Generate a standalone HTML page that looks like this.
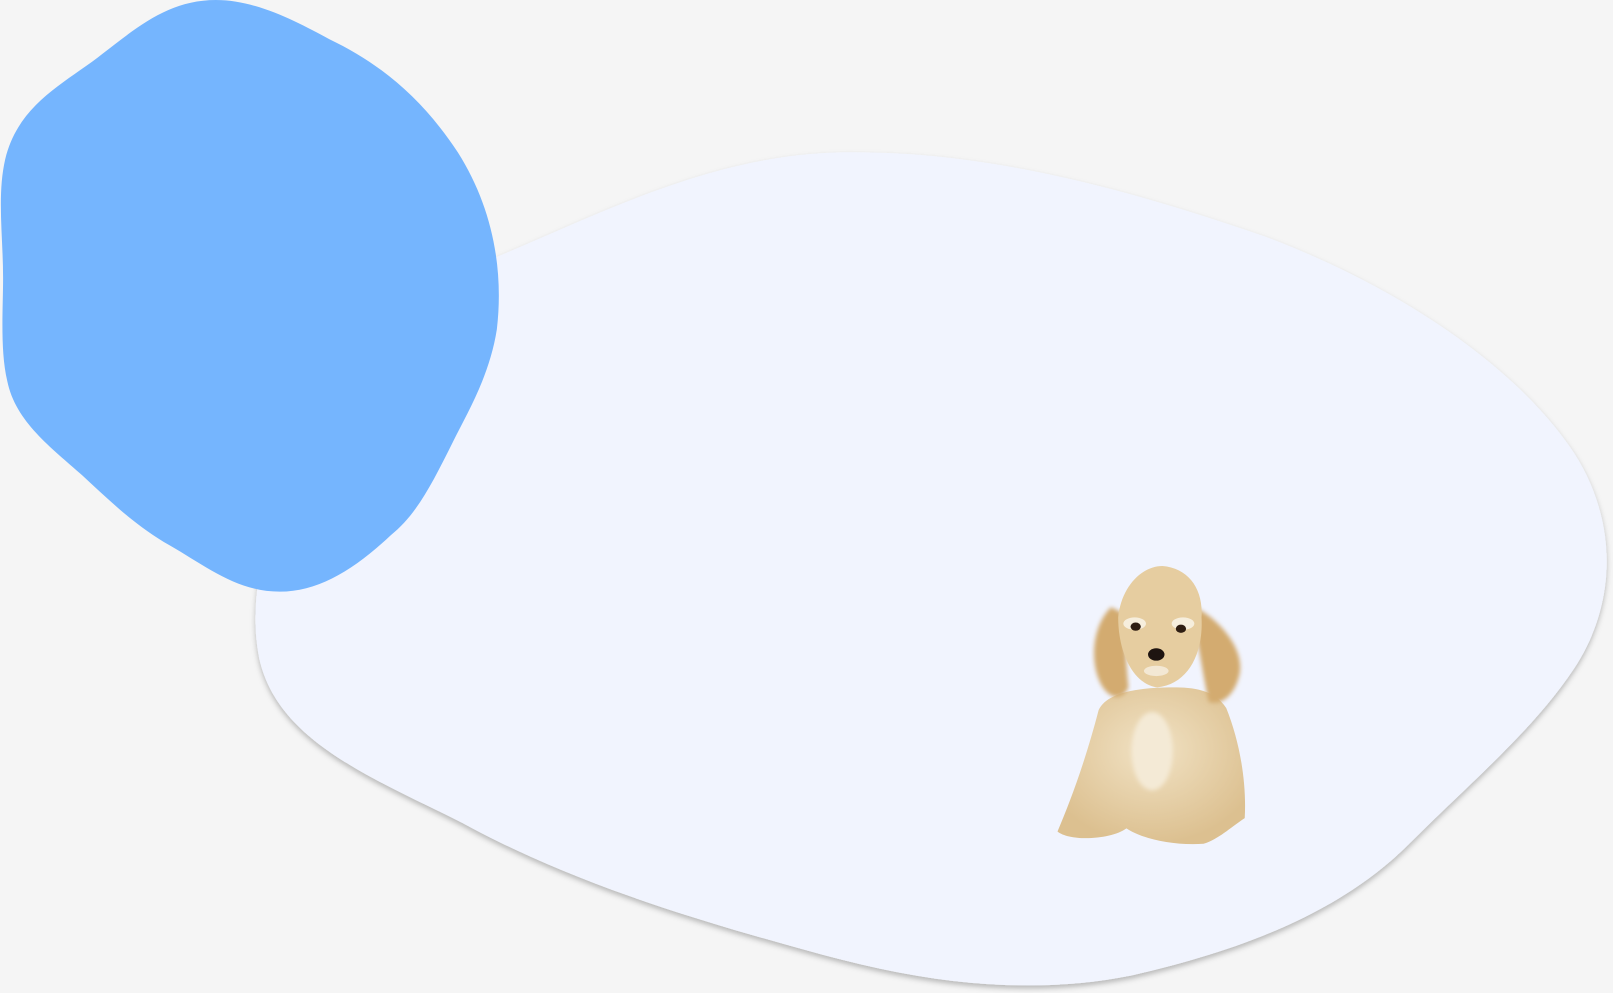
<!DOCTYPE html>
<html><head><style>
html,body{margin:0;padding:0;background:#f5f5f5;width:1613px;height:993px;overflow:hidden}
svg{display:block}
</style></head><body>
<svg width="1613" height="993" viewBox="0 0 1568 965" preserveAspectRatio="none">
<defs>
<filter id="sh" x="-10%" y="-10%" width="120%" height="130%">
<feDropShadow dx="0" dy="3" stdDeviation="2.5" flood-color="#000" flood-opacity="0.25"/>
</filter>
<filter id="blur"><feGaussianBlur stdDeviation="2"/></filter>
<radialGradient id="fur" cx="50%" cy="40%" r="60%">
<stop offset="0" stop-color="#f1e2c4"/><stop offset="1" stop-color="#dcc090"/>
</radialGradient>
</defs>
<path filter="url(#sh)" fill="#f1f4fe" d="M470,255 C580,210 690,150 820,148 C960,146 1100,185 1230,230 C1350,275 1470,350 1530,440 C1575,510 1570,590 1530,650 C1490,710 1430,760 1370,820 C1300,890 1200,925 1100,948 C1000,968 900,955 800,928 C680,895 560,860 450,800 C360,755 270,720 252,640 C244,600 250,560 260,520 Z"/>
<path fill="#75b5fe" d="M210,0 C250,0 290,22 320,38 C370,62 410,95 445,148 C478,200 490,260 483,320 C476,365 455,400 440,430 C420,470 405,500 380,520 C345,553 310,575 272,575 C230,575 200,550 165,530 C130,510 105,485 80,462 C50,435 15,410 7,370 C0,340 3,300 3,270 C3,230 -3,190 5,155 C18,100 65,80 100,52 C135,25 165,0 210,0 Z"/>
<g>
<path fill="url(#fur)" d="M1068,690 C1055,740 1040,780 1028,808 C1040,818 1080,816 1095,805 C1110,815 1140,822 1170,820 C1185,815 1195,805 1210,795 C1212,760 1205,720 1192,688 C1180,670 1160,668 1140,668 C1100,668 1075,675 1068,690 Z"/>
<ellipse cx="1120" cy="730" rx="20" ry="38" fill="#f4ead6" filter="url(#blur)"/>
<path fill="#d3ab70" filter="url(#blur)" d="M1080,590 C1062,608 1060,640 1068,660 C1075,678 1090,684 1097,668 C1094,640 1094,612 1090,595 Z"/>
<path fill="#d3ab70" filter="url(#blur)" d="M1162,590 C1185,602 1210,630 1205,655 C1200,678 1185,686 1175,682 C1168,650 1165,620 1158,600 Z"/>
<path fill="#e6cda0" d="M1087,600 C1090,570 1110,550 1130,550 C1155,552 1170,572 1168,600 C1170,635 1155,665 1125,668 C1102,665 1087,635 1087,600 Z"/>
<ellipse cx="1103" cy="606" rx="11" ry="6" fill="#f6eedd"/>
<ellipse cx="1150" cy="606" rx="11" ry="6" fill="#f6eedd"/>
<ellipse cx="1104" cy="609" rx="5" ry="4" fill="#2e1d12"/>
<ellipse cx="1148" cy="611" rx="5" ry="4" fill="#2e1d12"/>
<ellipse cx="1124" cy="636" rx="8" ry="6" fill="#1e1410"/>
<ellipse cx="1124" cy="652" rx="12" ry="5" fill="#f3e8d4"/>
</g>
</svg>
</body></html>
